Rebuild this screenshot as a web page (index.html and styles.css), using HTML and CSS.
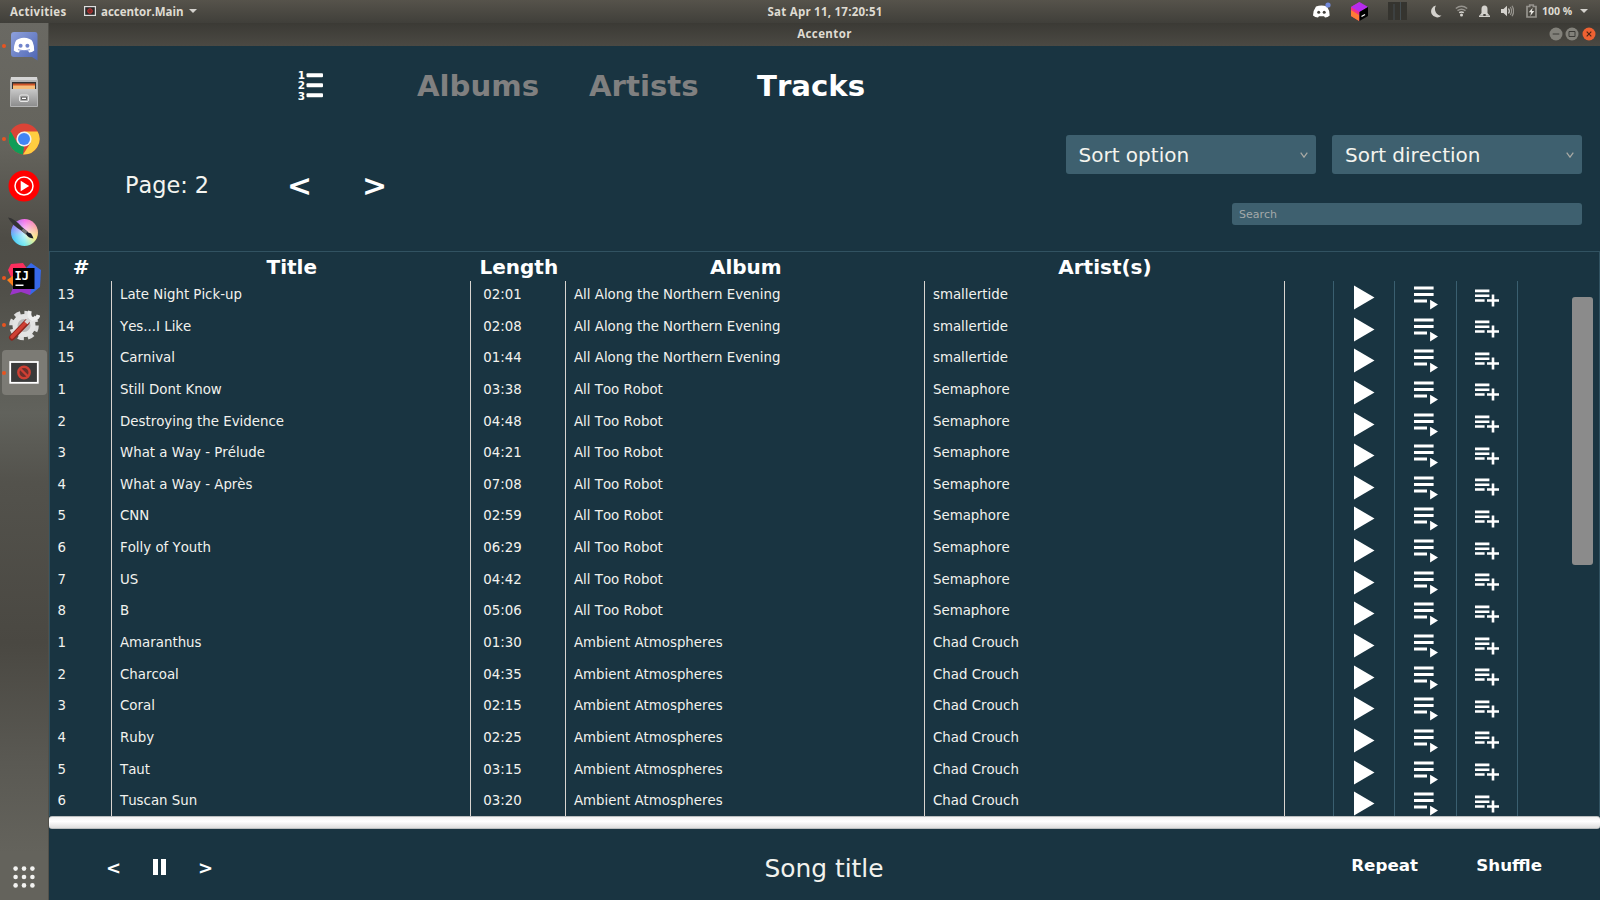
FILE: index.html
```html
<!DOCTYPE html>
<html lang="en">
<head>
<meta charset="utf-8">
<title>Accentor</title>
<link rel="stylesheet" href="styles.css">
</head>
<body>
<svg class="defs" width="0" height="0">
  <defs>
    <symbol id="play" viewBox="0 0 21 25"><path d="M0 0.5 20.5 12.5 0 24.5z"/></symbol>
    <symbol id="queue" viewBox="0 0 24 24"><path d="M0 0.6h19.6v3H0zM0 7h19.6v3H0zM0 13.4h13v3H0zM16.1 13.7 24 18.5 16.1 23.4z"/></symbol>
    <symbol id="add" viewBox="0 0 24 18"><path d="M0 0.6h14.4v2.6H0zM0 5.4h14.4V8H0zM0 10.2h9.6v2.6H0zM16.7 5.4h2.6v4.8H24v2.6h-4.7v4.8h-2.6v-4.8H12v-2.6h4.7z"/></symbol>
  </defs>
</svg>
<header class="topbar">
  <div class="top-left">
    <span class="activities">Activities</span>
    <svg width="12" height="10" viewBox="0 0 12 10"><rect x=".6" y=".6" width="10.8" height="8.8" fill="#2b2b2b" stroke="#ddd" stroke-width="1.2"/><circle cx="6" cy="5" r="2.3" fill="#7e2626" stroke="#b33" /></svg>
    <span class="appname">accentor.Main</span>
    <i class="caret"></i>
  </div>
  <div class="clock">Sat Apr 11, 17:20:51</div>
  <div class="tray">
    <svg width="19" height="18" viewBox="0 0 19 18"><path fill="#fff" d="M4 4.500Q9.500 2.500 15 4.500Q18 9 17.700 13.500Q15.500 15.700 13 15.500L12 14.200H7L6 15.500Q3 15.500 1 13.500Q.8 9 4 4.500z"/><circle cx="6.700" cy="10.300" r="1.500" fill="#45433e"/><circle cx="12.200" cy="10.300" r="1.500" fill="#45433e"/><circle cx="16" cy="3" r="2.600" fill="#7289da"/></svg>
    <svg class="t-cube" width="17" height="19" viewBox="0 0 17 19"><path fill="#f0308a" d="M0 5 8.500 0v19L0 14z"/><path fill="#ff7a35" d="M0 8 8 13v6L0 14z"/><path fill="#b62bee" d="M0 5 8.500 0 17 5 8.500 10z"/><path fill="#000" d="M17 5v9l-8.500 5V10z"/><path d="m10.500 14.500 3.500-2" stroke="#fff" stroke-width="1.300"/></svg>
    <svg class="t-graph" width="19" height="18" viewBox="0 0 19 18"><path fill="#35342f" d="M0 0h19v18H0z"/><path d="M6 2v16M12.500 0v18" stroke="#49545a" stroke-width=".8"/></svg>
    <svg class="t-moon" width="11" height="13" viewBox="0 0 11 13"><path fill="#d4d2cd" d="M5 .5A6 6 0 1 0 10.500 10.500 6.500 6.500 0 0 1 5 .5z"/></svg>
    <svg class="t-wifi" width="13" height="12" viewBox="0 0 13 12"><g fill="none" stroke="#96948e" stroke-width="1.500"><path d="M.8 3.500Q6.500-1 12.200 3.500"/><path d="M2.500 5.700q4-3 8 0"/></g><path fill="none" stroke="#d4d2cd" stroke-width="1.500" d="M4.200 7.700q2.300-1.600 4.600 0"/><circle cx="6.500" cy="10" r="1.500" fill="#d4d2cd"/></svg>
    <svg class="t-bell" width="11" height="13" viewBox="0 0 11 13"><path fill="#d4d2cd" d="M2.500 8V4a3 3.500 0 0 1 6 0v4l2 2.500H.5z"/><path fill="#d4d2cd" d="M0 10.500h11V12H0z"/><path d="M4.300 9h2.400v2H4.300z" fill="#45433e"/></svg>
    <svg class="t-vol" width="13" height="12" viewBox="0 0 13 12"><path fill="#d4d2cd" d="M0 4h2.500L6 .7v10.600L2.500 8H0z"/><path fill="none" stroke="#d4d2cd" stroke-width="1.200" d="M7.500 3.500q1.700 2.500 0 5"/><path fill="none" stroke="#96948e" stroke-width="1.200" d="M9.300 2q2.600 4 0 8M11 .7q3.300 5.300 0 10.600"/></svg>
    <svg class="t-bat" width="11" height="14" viewBox="0 0 11 14"><path fill="none" stroke="#96948e" stroke-width="1.700" d="M1 2.500h2.700V1h3.600v1.500H10V13H1z"/><path fill="#e8e6e1" d="M6.700 3.700 2.800 8.300h2.300L4.300 12l4-4.900H5.900z"/></svg>
    <span class="percent">100 %</span>
    <i class="caret"></i>
  </div>
</header>
<div class="desktop">
  <aside class="dock">
    <div class="tile run"><svg width="30" height="30" viewBox="0 0 30 30"><defs><linearGradient id="dg" x1="0" y1="0" x2="1" y2="1"><stop offset="0" stop-color="#8ea1dc"/><stop offset="1" stop-color="#4f66b4"/></linearGradient></defs><path fill="url(#dg)" d="M5 1h21q2.500 0 2.500 3v25.500L23 26H5q-3 0-3-3V4q0-3 3-3z"/><path fill="#fff" d="M9.500 8q5.500-2.400 11 0 4.500 1 4.700 11.500-2 2-5 2l-1.200-2h-8l-1.200 2q-3 0-5-2Q5 9 9.500 8z"/><circle cx="11.600" cy="14.700" r="2" fill="#7084cc"/><circle cx="18.400" cy="14.700" r="2" fill="#7084cc"/><path d="M9 18.700q6 2.200 12 0" fill="none" stroke="#7084cc" stroke-width=".8"/></svg></div>
    <div class="tile"><svg width="30" height="32" viewBox="0 0 30 32"><defs><linearGradient id="fg" x1="0" y1="0" x2="0" y2="1"><stop offset="0" stop-color="#c9c9c9"/><stop offset="1" stop-color="#8d8d8d"/></linearGradient></defs><path fill="#d5d5d5" d="M2 1h26l1 5H1z"/><path fill="#b4b4b4" d="M1 4h28v26q0 1-1 1H2q-1 0-1-1z"/><path fill="#333" d="M3 6h24v7H3z"/><path fill="#cf5528" d="M4 7.500h22V13H4z"/><path fill="#f6bd7b" d="M4 9.500h22V13H4z"/><path fill="url(#fg)" d="M2 13h26v17H2z"/><rect x="10.500" y="19" width="9" height="6.500" rx="1.500" fill="#aaa" stroke="#e8e8e8"/><path fill="#fff" stroke="#444" stroke-width=".8" d="M12.500 21.200h5v2.300h-5z"/></svg></div>
    <div class="tile run"><svg width="32" height="32" viewBox="0 0 32 32"><circle cx="16" cy="16" r="15.500" fill="#db4437"/><path fill="#0f9d58" d="M2.600 8.300 9.300 20 16 23.700l-1 7.800A15.500 15.500 0 0 1 2.600 8.300z"/><path fill="#ffcd40" d="M16 8.500h13.600A15.500 15.500 0 0 1 15 31.500L22.500 20z"/><circle cx="16" cy="16" r="7.600" fill="#f1f1f1"/><circle cx="16" cy="16" r="6" fill="#4285f4"/></svg></div>
    <div class="tile"><svg width="32" height="32" viewBox="0 0 32 32"><circle cx="16" cy="16" r="15.500" fill="#f00"/><circle cx="16" cy="16" r="9" fill="none" stroke="#fff" stroke-width="1.500"/><path fill="#fff" d="m12.700 10.700 8.500 5.300-8.500 5.300z"/></svg></div>
    <div class="tile"><i class="krita"></i><svg class="over" width="32" height="32" viewBox="0 0 32 32"><path fill="#333" d="M0 2.500Q6 3 14 12l6 5-2 2.500-5-4Q4 10 0 2.500z"/><path fill="#777" d="m15.500 13.500 4.500 3.500-2 2.500-4.500-4z"/><path fill="#1b1f2a" d="m19 17 4 1.500q2 3 2.500 5Q20 23 18 19z"/></svg></div>
    <div class="tile run"><svg width="34" height="34" viewBox="0 0 34 34"><path fill="#fb2f5e" d="M4 2 16 1l5 7-8 14-9-7-3-7z"/><path fill="#fc801d" d="m0 18 7-5 5 10-5 2z"/><path fill="#3768e8" d="m18 7 6-6 10 7-1 17-10 8-10-6z"/><path fill="#9a35c8" d="m3 33 5-12 16 6-1 6-9-3z"/><path fill="#000" d="M6 6h21.500v21H6z"/><text x="7.500" y="18" class="ij">IJ</text><path fill="#fff" d="M8.500 22.500h8V24h-8z"/></svg></div>
    <div class="tile run"><svg width="32" height="32" viewBox="0 0 32 32"><circle cx="16" cy="16.500" r="12.800" fill="none" stroke="#ddd" stroke-width="4" stroke-dasharray="6 4.053"/><circle cx="16" cy="16.500" r="9" fill="#b9b9b9" stroke="#e3e3e3" stroke-width="5"/><path d="m4 28.500 14.500-15" stroke="#8e241c" stroke-width="6" stroke-linecap="round"/><path d="m4 28 14-14.500" stroke="#cf4034" stroke-width="3.500" stroke-linecap="round"/><path d="m18 14 5-6" stroke="#d5d5d5" stroke-width="4"/><path d="M22 2q-2 6 2.500 8 5 0 6-4" fill="none" stroke="#ededed" stroke-width="3.800"/></svg></div>
    <div class="tile run active"><svg width="30" height="24" viewBox="0 0 30 24"><rect x="1.200" y="2" width="27.600" height="20.800" fill="#3a3a3a" stroke="#fff" stroke-width="1.800"/><circle cx="15" cy="12.500" r="5.700" fill="#6b302c" stroke="#cf4034" stroke-width="2.400"/><path d="m11 8.500 8 8" stroke="#cf4034" stroke-width="2.400"/></svg></div>
    <svg class="apps" width="22" height="22" viewBox="0 0 22 22"><g fill="#f3f3f1"><circle cx="2.600" cy="2.600" r="2.300"/><circle cx="11" cy="2.600" r="2.300"/><circle cx="19.400" cy="2.600" r="2.300"/><circle cx="2.600" cy="11" r="2.300"/><circle cx="11" cy="11" r="2.300"/><circle cx="19.400" cy="11" r="2.300"/><circle cx="2.600" cy="19.400" r="2.300"/><circle cx="11" cy="19.400" r="2.300"/><circle cx="19.400" cy="19.400" r="2.300"/></g></svg>
  </aside>
  <section class="window">
    <div class="titlebar">
      <span>Accentor</span>
      <div class="controls">
        <svg width="14" height="14" viewBox="0 0 14 14"><circle cx="7" cy="7" r="6.500" fill="#82817a"/><path d="M3.700 7h6.600" stroke="#3b3a36"/></svg>
        <svg width="14" height="14" viewBox="0 0 14 14"><circle cx="7" cy="7" r="6.500" fill="#82817a"/><path d="M4 4.500h6v5H4z" fill="none" stroke="#3b3a36"/></svg>
        <svg width="14" height="14" viewBox="0 0 14 14"><circle cx="7" cy="7" r="6.500" fill="#ef6132"/><path d="m4.700 4.700 4.600 4.600m0-4.600L4.700 9.300" stroke="#4a2314" stroke-width="1.100"/></svg>
      </div>
    </div>
    <nav class="nav">
      <svg class="list-icon" width="26" height="30" viewBox="0 0 26 30"><g fill="#fff"><rect x="8.500" y="2.200" width="16.500" height="4" rx="1"/><rect x="8.500" y="12.200" width="16.500" height="4" rx="1"/><rect x="8.500" y="22.200" width="16.500" height="4" rx="1"/><text x="-.3" y="8">1</text><text x="-.3" y="18">2</text><text x="-.3" y="28.500">3</text></g></svg>
      <span class="albums">Albums</span><span class="artists">Artists</span><span class="on">Tracks</span>
    </nav>
    <div class="tools">
      <div class="pager"><span class="page">Page: 2</span><b class="prev">&lt;</b><b>&gt;</b></div>
      <div class="filters">
        <div class="selects">
          <div class="select"><span>Sort option</span><svg width="8" height="6" viewBox="0 0 8 6"><path d="m.7.700 3.300 4.500L7.300.7" fill="none" stroke="#a9aaa5" stroke-width="1.200"/></svg></div>
          <div class="select"><span>Sort direction</span><svg width="8" height="6" viewBox="0 0 8 6"><path d="m.7.700 3.300 4.500L7.300.7" fill="none" stroke="#a9aaa5" stroke-width="1.200"/></svg></div>
        </div>
        <div class="search">Search</div>
      </div>
    </div>
    <div class="table">
      <div class="thead"><span>#</span><span>Title</span><span>Length</span><span>Album</span><span>Artist(s)</span></div>
      <div class="body">
        <div class="rows" id="rows"></div>
        <div class="scroll"><div class="thumb"></div></div>
      </div>
    </div>
    <div class="progress"></div>
    <footer class="player">
      <div class="transport"><b>&lt;</b><svg width="13" height="16" viewBox="0 0 13 16"><path fill="#fff" d="M0 0h5v16H0zM8 0h5v16H8z"/></svg><b>&gt;</b></div>
      <div class="song">Song title</div>
      <div class="modes"><b class="repeat">Repeat</b><b>Shuffle</b></div>
    </footer>
  </section>
</div>
<script src="app.js"></script>
</body>
</html>
```
FILE: styles.css
```css
* { box-sizing: border-box; }
body {
  margin: 0; width: 1600px; height: 900px; overflow: hidden;
  display: flex; flex-direction: column;
  background: #193441; color: #fff;
  font-family: "DejaVu Sans", sans-serif; font-kerning: none;
}
svg { display: block; flex: none; }
.defs { display: none; }

.topbar {
  height: 22.500px; flex: none;
  display: grid; grid-template-columns: 1fr auto 1fr; align-items: center;
  padding-right: 12px; padding-left: 10px;
  background: linear-gradient(#56534b, #403f3a);
  font: bold 11.500px "Open Sans", sans-serif; color: #dfdbd2;
}
.top-left, .tray { display: flex; align-items: center; }
.activities { width: 74px; letter-spacing: .3px; }
.appname { margin: 0 5px 0 5px; width: 83px; white-space: nowrap; }
.caret { border: 4px solid transparent; border-top: 4.500px solid #d4d2cd; border-bottom: 0; }
.clock { position: relative; left: 26px; white-space: nowrap; letter-spacing: .25px; }
.tray { justify-content: flex-end; }
.t-cube { margin-left: 20px; }
.t-graph { margin-left: 20px; }
.t-moon { margin-left: 24px; }
.t-wifi { margin-left: 13px; }
.t-bell { margin-left: 11px; }
.t-vol { margin-left: 11px; }
.t-bat { margin-left: 12px; }
.percent { margin: 0 9px 0 5px; font-size: 10.500px; width: 29px; white-space: nowrap; }

.desktop { flex: 1; min-height: 0; display: flex; }
.dock {
  width: 49px; flex: none; display: flex; flex-direction: column; align-items: center;
  border-right: 1px solid #51504a;
  background: linear-gradient(#6a6963 0, #64635c 125px, #4e4c46 215px, #504f49 270px, #5c5c56 340px, #61625c 390px, #53524c 460px, #4a4842 620px, #5a5953 740px, #64635c 830px);
}
.tile {
  width: 49px; height: 46.600px; flex: none; position: relative;
  display: flex; align-items: center; justify-content: center;
}
.run::before {
  content: ""; position: absolute; left: 2px; top: 21px;
  width: 4px; height: 4px; border-radius: 50%; background: #e95420;
}
.active { width: 45px; height: 45px; margin-top: 1px; border-radius: 4px; background: #7c7b75; }
.active::before { left: 0; }
.krita {
  width: 27px; height: 27px; border-radius: 50%;
  background: radial-gradient(circle, rgba(255,255,255,.7), transparent 70%), conic-gradient(#f66be8, #f9a0a8, #f9f080, #70e8f0, #48c8f8, #8a80f8, #f66be8);
}
.over { position: absolute; left: 8px; top: 6px; }
.ij { font: bold 12px "DejaVu Sans Mono", monospace; fill: #fff; }
.apps { margin: auto 0 12.500px; }

.window { flex: 1; min-width: 0; display: flex; flex-direction: column; }
.titlebar {
  height: 23.500px; flex: none; position: relative;
  display: flex; align-items: center; justify-content: center;
  background: linear-gradient(#3b3a35, #4b4943);
  font: bold 11.500px/20px "Open Sans", sans-serif; letter-spacing: .4px; color: #dfdbd2;
}
.titlebar span { margin-top: -1px; }
.controls { position: absolute; right: 4px; top: 4.500px; display: flex; gap: 2.700px; }

.nav {
  height: 80px; flex: none; display: flex; align-items: center;
  padding-left: 249px; font-weight: bold; font-size: 29.200px; color: #808080;
}
.nav text { font: bold 10.500px "DejaVu Sans", sans-serif; }
.list-icon { margin-right: 93px; }
.albums { width: 172px; }
.artists { width: 168px; }
.on { color: #fff; }

.tools { height: 125px; flex: none; display: flex; justify-content: space-between; }
.pager { display: flex; align-items: center; height: 119px; padding-left: 76px; }
.page { font-size: 22.400px; width: 162px; color: #f4f4f0; margin-top: -2px; }
.pager b { font-size: 30px; }
.prev { width: 75px; }
.filters { display: flex; flex-direction: column; align-items: flex-end; padding: 9px 18px 0 0; }
.selects { display: flex; gap: 16.500px; }
.select {
  width: 250px; height: 39px; padding: 0 8px 0 13px; border-radius: 3px; background: #3e606f;
  display: flex; align-items: center; justify-content: space-between;
  font-size: 20px; color: #f4f4ee;
}
.search {
  width: 350px; height: 22px; margin-top: 29px; padding-left: 7px; border-radius: 3px;
  background: #3e606f; color: #a3a9aa; font-size: 11px; line-height: 23px;
}

.table {
  height: 565px; flex: none; overflow: hidden; display: flex; flex-direction: column;
  border: 1px solid #315261; border-bottom: 0;
}
.thead, .row {
  display: grid;
  grid-template-columns: 62.300px 359px 95px 359px 359.300px 49px 61.600px 61.500px 61px 1fr;
}
.thead {
  height: 30px; flex: none; align-items: center; text-align: center;
  font-weight: bold; font-size: 20px;
}
.body { flex: 1; min-height: 0; display: flex; position: relative; }
.rows { flex: 1; min-width: 0; margin-top: -1px; }
.row { height: 31.650px; font-size: 13.350px; color: #f2f2ee; }
.row span { padding-left: 7.700px; line-height: 27px; white-space: nowrap; border-right: 1.500px solid #d8d4d0; }
.row .len { padding-left: 12px; }
.row .num { padding-left: 7.500px; }
.row div { border-right: 1px solid #3a5f70; fill: #fff; display: flex; justify-content: center; }
.row div:last-child { border: 0; }
.row .i-play { width: 21px; height: 25px; margin: 4px 0 0 1px; }
.row .i-queue { width: 24px; height: 24px; margin: 5px 0 0 1px; }
.row .i-add { width: 24px; height: 18px; margin: 7.500px 0 0 1px; }
.scroll { position: absolute; right: 6px; top: 14.500px; width: 21px; height: 520px; }
.thumb { height: 268px; border-radius: 3px; background: #8b8b8b; }

.progress {
  height: 13px; flex: none; border-radius: 3px; border: 1px solid #b9bdbe; border-width: 1px 0;
  background: linear-gradient(#f2f2f2, #fff 40%, #dedede);
}
.player {
  flex: 1; display: grid; grid-template-columns: 1fr auto 1fr; align-items: center;
  padding: 7px 58px 0 57px;
}
.transport { display: flex; align-items: center; gap: 32px; font-size: 18px; margin-top: -2px; }
.song { font-size: 24.900px; color: #f2f2ee; }
.modes { display: flex; justify-content: flex-end; font-size: 16.700px; margin-top: -6px; }
.repeat { width: 125px; }
```
FILE: app.js
```js
const albums = [
  ["All Along the Northern Evening", "smallertide", [[13, "Late Night Pick-up", "02:01"], [14, "Yes...I Like", "02:08"], [15, "Carnival", "01:44"]]],
  ["All Too Robot", "Semaphore", [[1, "Still Dont Know", "03:38"], [2, "Destroying the Evidence", "04:48"], [3, "What a Way - Prélude", "04:21"], [4, "What a Way - Après", "07:08"], [5, "CNN", "02:59"], [6, "Folly of Youth", "06:29"], [7, "US", "04:42"], [8, "B", "05:06"]]],
  ["Ambient Atmospheres", "Chad Crouch", [[1, "Amaranthus", "01:30"], [2, "Charcoal", "04:35"], [3, "Coral", "02:15"], [4, "Ruby", "02:25"], [5, "Taut", "03:15"], [6, "Tuscan Sun", "03:20"]]]
];
const icon = name => `<div><svg class="i-${name}"><use href="#${name}"/></svg></div>`;
document.getElementById("rows").innerHTML = albums.map(([album, artist, tracks]) =>
  tracks.map(([n, title, len]) =>
    `<div class="row"><span class="num">${n}</span><span>${title}</span><span class="len">${len}</span><span>${album}</span><span>${artist}</span><div></div>${icon("play")}${icon("queue")}${icon("add")}<div></div></div>`
  ).join("")).join("");
```
